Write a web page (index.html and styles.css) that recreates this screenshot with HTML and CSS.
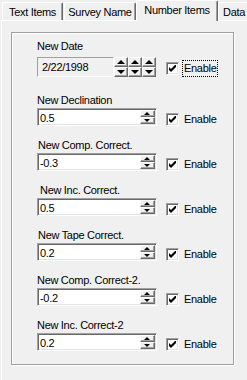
FILE: index.html
```html
<!DOCTYPE html>
<html>
<head>
<meta charset="utf-8">
<link rel="stylesheet" href="styles.css">
</head>
<body>
<div class="tabs">
  <div class="tab t1">Text Items</div>
  <div class="tab t2">Survey Name</div>
  <div class="tab sel">Number Items</div>
  <div class="tab t4">Data</div>
</div>
<div class="panel">
  <div class="group">
    <div class="item date-item">
      <div class="label">New Date</div>
      <div class="row">
        <div class="datefield">2/22/1998</div>
        <div class="dspin"><span class="btn big"><i class="up"></i></span><span class="btn big"><i class="down"></i></span></div>
        <div class="dspin"><span class="btn big"><i class="up"></i></span><span class="btn big"><i class="down"></i></span></div>
        <div class="dspin"><span class="btn big"><i class="up"></i></span><span class="btn big"><i class="down"></i></span></div>
        <div class="check date-check"><span class="box"><svg width="7" height="7" viewBox="0 0 7 7"><path d="M0 2 L2 4 L7 -1 L7 2 L2 7 L0 5 Z" fill="#000"/></svg></span><span class="cap focus">Enable</span></div>
      </div>
    </div>
    <div class="item">
      <div class="label">New Declination</div>
      <div class="row">
        <div class="field"><span class="value">0.5</span><div class="spin"><span class="btn"><i class="up"></i></span><span class="btn"><i class="down"></i></span></div></div>
        <div class="check"><span class="box"><svg width="7" height="7" viewBox="0 0 7 7"><path d="M0 2 L2 4 L7 -1 L7 2 L2 7 L0 5 Z" fill="#000"/></svg></span><span class="cap">Enable</span></div>
      </div>
    </div>
    <div class="item">
      <div class="label ind1">New Comp. Correct.</div>
      <div class="row">
        <div class="field"><span class="value">-0.3</span><div class="spin"><span class="btn"><i class="up"></i></span><span class="btn"><i class="down"></i></span></div></div>
        <div class="check"><span class="box"><svg width="7" height="7" viewBox="0 0 7 7"><path d="M0 2 L2 4 L7 -1 L7 2 L2 7 L0 5 Z" fill="#000"/></svg></span><span class="cap">Enable</span></div>
      </div>
    </div>
    <div class="item">
      <div class="label ind3">New Inc. Correct.</div>
      <div class="row">
        <div class="field"><span class="value">0.5</span><div class="spin"><span class="btn"><i class="up"></i></span><span class="btn"><i class="down"></i></span></div></div>
        <div class="check"><span class="box"><svg width="7" height="7" viewBox="0 0 7 7"><path d="M0 2 L2 4 L7 -1 L7 2 L2 7 L0 5 Z" fill="#000"/></svg></span><span class="cap">Enable</span></div>
      </div>
    </div>
    <div class="item">
      <div class="label ind1">New Tape Correct.</div>
      <div class="row">
        <div class="field"><span class="value">0.2</span><div class="spin"><span class="btn"><i class="up"></i></span><span class="btn"><i class="down"></i></span></div></div>
        <div class="check"><span class="box"><svg width="7" height="7" viewBox="0 0 7 7"><path d="M0 2 L2 4 L7 -1 L7 2 L2 7 L0 5 Z" fill="#000"/></svg></span><span class="cap">Enable</span></div>
      </div>
    </div>
    <div class="item">
      <div class="label">New Comp. Correct-2.</div>
      <div class="row">
        <div class="field"><span class="value">-0.2</span><div class="spin"><span class="btn"><i class="up"></i></span><span class="btn"><i class="down"></i></span></div></div>
        <div class="check"><span class="box"><svg width="7" height="7" viewBox="0 0 7 7"><path d="M0 2 L2 4 L7 -1 L7 2 L2 7 L0 5 Z" fill="#000"/></svg></span><span class="cap">Enable</span></div>
      </div>
    </div>
    <div class="item">
      <div class="label">New Inc. Correct-2</div>
      <div class="row">
        <div class="field"><span class="value">0.2</span><div class="spin"><span class="btn"><i class="up"></i></span><span class="btn"><i class="down"></i></span></div></div>
        <div class="check"><span class="box"><svg width="7" height="7" viewBox="0 0 7 7"><path d="M0 2 L2 4 L7 -1 L7 2 L2 7 L0 5 Z" fill="#000"/></svg></span><span class="cap">Enable</span></div>
      </div>
    </div>
  </div>
</div>
</body>
</html>
```

FILE: styles.css
```css
html, body {
  margin: 0;
  padding: 0;
}
body {
  width: 247px;
  height: 380px;
  overflow: hidden;
  background: #f0f0f0;
  color: #000;
  font-family: "Liberation Sans", Arial, sans-serif;
  font-size: 11px;
  line-height: 13px;
  letter-spacing: -0.3px;
}

/* Tabs */
.tabs {
  display: flex;
  align-items: flex-end;
  height: 20px;
  position: relative;
  z-index: 1;
}
.tab {
  flex-shrink: 0;
  box-sizing: border-box;
  height: 18px;
  padding-top: 3px;
  background: #f0f0f0;
  border-top: 1px solid #fff;
  border-left: 1px solid #fff;
  border-right: 1px solid #696969;
  box-shadow: inset -1px 0 0 #a0a0a0;
  border-radius: 2px 2px 0 0;
  text-align: center;
  white-space: nowrap;
}
.t1 { margin-left: 2px; width: 61px; }
.t2 { margin-left: 1px; width: 72px; }
.sel {
  width: 82px;
  height: 21px;
  margin-bottom: -1px;
}
.t4 {
  width: 40px;
  text-align: left;
  padding-left: 4px;
}

/* Panel */
.panel {
  margin-left: 1px;
  border-top: 1px solid #fff;
  border-left: 1px solid #fff;
  height: 360px;
  padding-top: 11px;
  box-sizing: border-box;
}
.group {
  box-sizing: border-box;
  margin-left: 9px;
  width: 223px;
  height: 333px;
  border: 1px solid #a0a0a0;
  box-shadow: inset 1px 1px 0 #fff, 1px 1px 0 #fff;
  padding: 7px 0 0 25px;
  display: flex;
  flex-direction: column;
  gap: 13px;
}
.date-item {
  margin-bottom: 4px;
}
.label {
  height: 13px;
  margin-bottom: 1px;
  white-space: nowrap;
}
.date-item .label { margin-bottom: 4px; }
.ind1 { padding-left: 1px; }
.ind3 { padding-left: 3px; }

.row {
  display: flex;
  align-items: flex-start;
}

/* Date field */
.datefield {
  box-sizing: border-box;
  width: 77px;
  height: 20px;
  border: 1px solid;
  border-color: #a0a0a0 #fff #fff #a0a0a0;
  padding-left: 4px;
  display: flex;
  align-items: center;
}
.dspin {
  width: 14px;
  height: 20px;
  display: flex;
  flex-direction: column;
}

/* Numeric field */
.field {
  box-sizing: border-box;
  width: 120px;
  height: 18px;
  border: 1px solid;
  border-color: #a0a0a0 #fff #fff #a0a0a0;
  box-shadow: inset 1px 1px 0 #696969, inset -1px -1px 0 #e3e3e3;
  background: #fff;
  display: flex;
  padding: 1px;
}
.value {
  flex: 1;
  padding-left: 1px;
  padding-top: 2px;
}
.spin {
  width: 15px;
  display: flex;
  flex-direction: column;
}

.btn {
  box-sizing: border-box;
  flex: 1;
  background: #f0f0f0;
  border: 1px solid;
  border-color: #fff #696969 #696969 #fff;
  box-shadow: inset -1px -1px 0 #a0a0a0;
  display: flex;
  align-items: center;
  justify-content: center;
}
.btn i {
  display: block;
  width: 0;
  height: 0;
  border-left: 3px solid transparent;
  border-right: 3px solid transparent;
}
.btn i.up { border-bottom: 3px solid #000; margin-right: 1px; }
.btn i.down { border-top: 3px solid #000; margin-right: 1px; }
.btn.big i {
  border-left-width: 4px;
  border-right-width: 4px;
}
.btn.big i.up { border-bottom-width: 4px; }
.btn.big i.down { border-top-width: 4px; }

/* Checkbox */
.check {
  display: flex;
  align-items: flex-start;
  margin-left: 9px;
  margin-top: 5px;
}
.date-check { margin-left: 10px; }
.box {
  box-sizing: border-box;
  width: 13px;
  height: 13px;
  border: 1px solid;
  border-color: #a0a0a0 #fff #fff #a0a0a0;
  box-shadow: inset 1px 1px 0 #696969, inset -1px -1px 0 #e3e3e3;
  background: #fff;
  display: flex;
  align-items: center;
  justify-content: center;
}
.box svg { display: block; }
.cap {
  margin-left: 5px;
}
.focus {
  margin-left: 3px;
  margin-top: -2px;
  padding: 1px;
  border: 1px dotted #000;
}
```
